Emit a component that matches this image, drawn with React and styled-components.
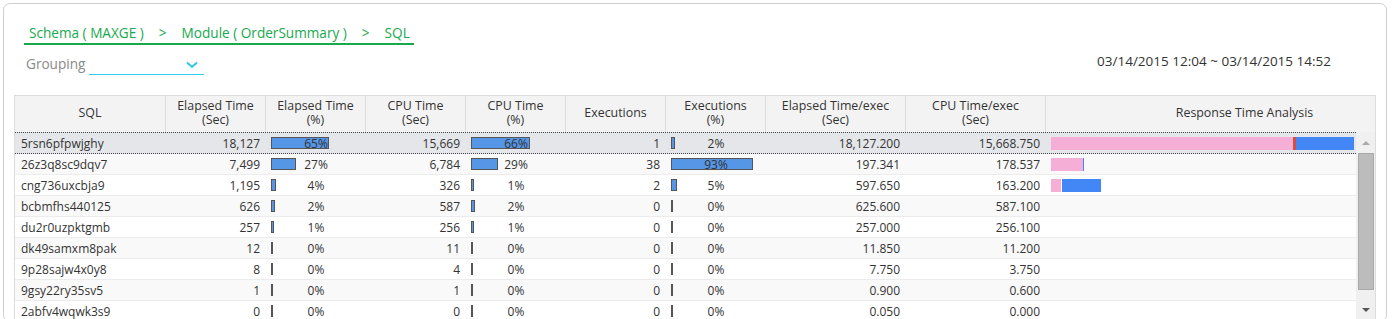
import React from "react";
import styled, { createGlobalStyle } from "styled-components";

const Global = createGlobalStyle`
  html, body { margin: 0; padding: 0; background: #fff; }
  body { font-family: "Open Sans", "Noto Sans", sans-serif; color: #333; overflow: hidden; }
  * { box-sizing: border-box; }
`;

const COLS = "151px 100px 100px 100px 100px 100px 100px 140px 140px 1fr";

const Panel = styled.div`
  margin: 3px 0 0 3px;
  width: 1384px;
  border: 1px solid #cfcfcf;
  border-radius: 7px;
  padding: 17px 10px 0 10px;
  background: #fff;
`;

const Breadcrumb = styled.nav`
  display: inline-flex;
  gap: 15px;
  margin-left: 10px;
  padding: 0 4px 0 5px;
  border-bottom: 2px solid #17a94c;
  font-size: 13.6px;
  line-height: 20px;
  color: #17a94c;
  white-space: pre;
`;

const Toolbar = styled.div`
  display: flex;
  align-items: flex-start;
  margin-top: 7px;
  height: 23px;
`;

const Label = styled.span`
  width: 63px;
  margin: 0 0 0 12px;
  font-size: 13.6px;
  line-height: 24px;
  color: #8a8a8a;
  white-space: nowrap;
`;

const Select = styled.div`
  display: flex;
  justify-content: flex-end;
  align-items: center;
  width: 115px;
  height: 23px;
  padding: 4px 6px 0 0;
  border-bottom: 1px solid #2fd0ef;
`;

const DateRange = styled.span`
  margin-left: auto;
  margin-right: 45px;
  font-size: 13.5px;
  line-height: 18px;
  color: #333;
`;

const Table = styled.div`
  margin-top: 20px;
  border: 1px solid #dcdcdc;
  border-bottom: none;
`;

const HeadRow = styled.div`
  display: grid;
  grid-template-columns: ${COLS};
  height: 36px;
  background: #f3f3f3;
`;

const HeadCell = styled.div`
  display: flex;
  flex-direction: column;
  justify-content: center;
  align-items: center;
  text-align: center;
  font-size: 12.4px;
  line-height: 14px;
  padding: 0 0 2px ${(p) => p.$shift || 0}px;
  color: #333;
  border-right: ${(p) => (p.$last ? "none" : "1px solid #dcdcdc")};
`;

const Body = styled.div`
  display: flex;
  height: 189px;
  overflow: hidden;
`;

const Rows = styled.div`
  flex: 1;
`;

const Row = styled.div`
  display: grid;
  grid-template-columns: ${COLS};
  height: ${(p) => (p.$selected ? 22 : 21)}px;
  align-items: center;
  font-size: 12px;
  background: ${(p) => (p.$selected ? "#e4e6e9" : p.$alt ? "#f9f9f9" : "#fff")};
  border-top: ${(p) => (p.$selected ? "1px dotted #444" : "none")};
  border-bottom: ${(p) => (p.$selected ? "1px dotted #444" : "1px solid #ececec")};
`;

const Cell = styled.div`
  padding: 0 6px;
  text-align: ${(p) => p.$align || "left"};
  white-space: nowrap;
  overflow: hidden;
  line-height: 19px;
  color: #333;
`;

const PctCell = styled.div`
  position: relative;
  height: 19px;
  display: flex;
  align-items: center;
  padding-left: 5px;
`;

const PctBar = styled.div`
  height: 12px;
  background: #5596e6;
  border: 1px solid #555;
`;

const PctText = styled.span`
  position: absolute;
  left: 0;
  right: 0;
  top: 0;
  text-align: center;
  line-height: 19px;
  color: #333;
`;

const RtaCell = styled.div`
  display: flex;
  align-items: center;
  height: 19px;
  padding-left: 5px;
`;

const Seg = styled.div`
  height: 13px;
  background: ${(p) => p.$color};
`;

const Scrollbar = styled.div`
  width: 19px;
  background: #f0f0f0;
  display: flex;
  flex-direction: column;
  align-items: center;
`;

const Arrow = styled.div`
  height: 21px;
  display: flex;
  align-items: center;
  justify-content: center;
`;

const Thumb = styled.div`
  width: 16px;
  height: 138px;
  background: #bcbcbc;
  border: 1px solid #a9a9a9;
  margin-left: 1px;
`;

const rows = [
  ["5rsn6pfpwjghy", "18,127", 65, "15,669", 66, "1", 2, "18,127.200", "15,668.750", [[242, "#f5aed5"], [3, "#d2503f"], [58, "#4287f5"]]],
  ["26z3q8sc9dqv7", "7,499", 27, "6,784", 29, "38", 93, "197.341", "178.537", [[32, "#f5aed5"], [1, "#4287f5"]]],
  ["cng736uxcbja9", "1,195", 4, "326", 1, "2", 5, "597.650", "163.200", [[10, "#f5aed5"], [1, "#ffffff"], [39, "#4287f5"]]],
  ["bcbmfhs440125", "626", 2, "587", 2, "0", 0, "625.600", "587.100", []],
  ["du2r0uzpktgmb", "257", 1, "256", 1, "0", 0, "257.000", "256.100", []],
  ["dk49samxm8pak", "12", 0, "11", 0, "0", 0, "11.850", "11.200", []],
  ["9p28sajw4x0y8", "8", 0, "4", 0, "0", 0, "7.750", "3.750", []],
  ["9gsy22ry35sv5", "1", 0, "1", 0, "0", 0, "0.900", "0.600", []],
  ["2abfv4wqwk3s9", "0", 0, "0", 0, "0", 0, "0.050", "0.000", []],
];

const Pct = ({ v }) => (
  <PctCell>
    <PctBar style={{ width: `${Math.round(v * 0.86) + 2}px` }} />
    <PctText>{v}%</PctText>
  </PctCell>
);

const headers = [
  ["SQL"],
  ["Elapsed Time", "(Sec)"],
  ["Elapsed Time", "(%)"],
  ["CPU Time", "(Sec)"],
  ["CPU Time", "(%)"],
  ["Executions"],
  ["Executions", "(%)"],
  ["Elapsed Time/exec", "(Sec)"],
  ["CPU Time/exec", "(Sec)"],
  ["Response Time Analysis"],
];

export default function App() {
  return (
    <>
      <Global />
      <Panel>
        <Breadcrumb>
          <span>Schema ( MAXGE )</span>
          <span>&gt;</span>
          <span>Module ( OrderSummary )</span>
          <span>&gt;</span>
          <span>SQL</span>
        </Breadcrumb>
        <Toolbar>
          <Label>Grouping</Label>
          <Select>
            <svg width="12" height="8" viewBox="0 0 12 8">
              <path d="M1 1.5 L6 6 L11 1.5" fill="none" stroke="#2fc6ea" strokeWidth="2" />
            </svg>
          </Select>
          <DateRange>03/14/2015 12:04 ~ 03/14/2015 14:52</DateRange>
        </Toolbar>
        <Table>
          <HeadRow>
            {headers.map((h, i) => (
              <HeadCell key={i} $last={i === headers.length - 1} $shift={i === headers.length - 1 ? 68 : 0}>
                {h.map((l) => (
                  <span key={l}>{l}</span>
                ))}
              </HeadCell>
            ))}
          </HeadRow>
          <Body>
            <Rows>
              {rows.map((r, i) => (
                <Row key={r[0]} $selected={i === 0} $alt={i % 2 === 1}>
                  <Cell>{r[0]}</Cell>
                  <Cell $align="right">{r[1]}</Cell>
                  <Pct v={r[2]} />
                  <Cell $align="right">{r[3]}</Cell>
                  <Pct v={r[4]} />
                  <Cell $align="right">{r[5]}</Cell>
                  <Pct v={r[6]} />
                  <Cell $align="right">{r[7]}</Cell>
                  <Cell $align="right">{r[8]}</Cell>
                  <RtaCell>
                    {r[9].map(([w, c], k) => (
                      <Seg key={k} $color={c} style={{ width: `${w}px` }} />
                    ))}
                  </RtaCell>
                </Row>
              ))}
            </Rows>
            <Scrollbar>
              <Arrow>
                <svg width="8" height="5" viewBox="0 0 8 5">
                  <path d="M0 5 L4 1 L8 5 Z" fill="#aaa" />
                </svg>
              </Arrow>
              <Thumb />
              <Arrow style={{ marginTop: "10px" }}>
                <svg width="8" height="5" viewBox="0 0 8 5">
                  <path d="M0 0 L8 0 L4 4 Z" fill="#555" />
                </svg>
              </Arrow>
            </Scrollbar>
          </Body>
        </Table>
      </Panel>
    </>
  );
}
